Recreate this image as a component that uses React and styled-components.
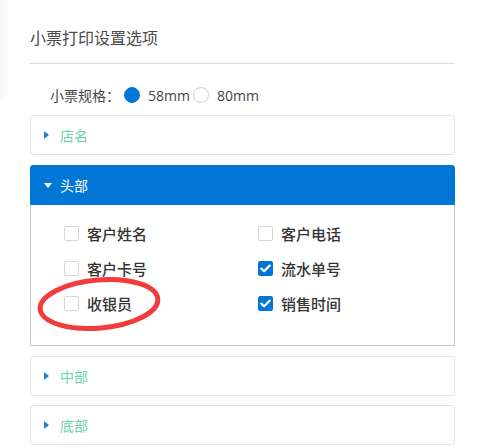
import styled, { createGlobalStyle } from 'styled-components';

const GlobalStyle = createGlobalStyle`
  html, body {
    margin: 0;
    padding: 0;
    background: #fff;
  }
  body {
    font-family: "Open Sans", "Noto Sans CJK SC", sans-serif;
    color: #333;
  }
`;

const Page = styled.div`
  position: relative;
  width: 425px;
  padding: 0 32px 0 30px;
  min-height: 448px;

  &::before {
    content: '';
    position: absolute;
    left: 0;
    top: 0;
    width: 9px;
    height: 100px;
    background: linear-gradient(to right, rgba(0, 0, 0, 0.035), rgba(0, 0, 0, 0));
  }
`;

const Title = styled.div`
  padding: 28px 0 14px;
  line-height: 21px;
  font-size: 16px;
  color: #4a4a4a;
  border-bottom: 1px solid #dcdcdc;
`;

const SizeRow = styled.div`
  display: flex;
  align-items: center;
  height: 20px;
  margin: 21px 0 10px;
  padding-left: 20px;
  font-size: 14px;
  color: #444;
`;

const SizeLabel = styled.span`
  margin-right: 4px;
`;

const Radio = styled.span`
  width: 16px;
  height: 16px;
  box-sizing: border-box;
  border-radius: 50%;
  border: 1px solid ${p => (p.$checked ? '#0076d7' : '#d0d0d0')};
  background: ${p => (p.$checked ? '#0076d7' : '#fff')};
  margin-right: 8px;
`;

const RadioText = styled.span`
  font-size: 14px;
  margin-right: 3px;
`;

const Panel = styled.div`
  margin-bottom: ${p => p.$gap || 10}px;
  border-radius: 3px;
`;

const Header = styled.div`
  display: flex;
  align-items: center;
  height: 40px;
  box-sizing: border-box;
  padding-left: 13px;
  border: 1px solid ${p => (p.$open ? '#0076d7' : '#e3e3e3')};
  border-radius: ${p => (p.$open ? '3px 3px 0 0' : '3px')};
  background: ${p => (p.$open ? '#0076d7' : '#fff')};
  color: ${p => (p.$open ? '#fff' : '#6fd3a5')};
  font-size: 14px;
`;

const Caret = styled.span`
  display: inline-block;
  width: 0;
  height: 0;
  margin-right: ${p => (p.$open ? '8px' : '11px')};
  ${p =>
    p.$open
      ? `border-left: 4.5px solid transparent;
         border-right: 4.5px solid transparent;
         border-top: 5px solid #fff;`
      : `border-top: 4.5px solid transparent;
         border-bottom: 4.5px solid transparent;
         border-left: 5px solid #1c7fd9;`}
`;

const Body = styled.div`
  position: relative;
  height: 141px;
  box-sizing: border-box;
  border: 1px solid #c8c8c8;
  border-top: none;
  padding: 11px 0 0 33px;
`;

const Grid = styled.div`
  display: grid;
  grid-template-columns: 194px 160px;
  grid-auto-rows: 35px;
`;

const Option = styled.label`
  display: flex;
  align-items: center;
  font-size: 15px;
  color: #333;
  font-weight: 500;
`;

const Box = styled.span`
  display: flex;
  align-items: center;
  justify-content: center;
  width: 15px;
  height: 15px;
  box-sizing: border-box;
  border-radius: 2px;
  border: 1px solid ${p => (p.$checked ? '#0076d7' : '#d6d6d6')};
  background: ${p => (p.$checked ? '#0076d7' : '#fff')};
  margin-right: 8px;
`;

const Circle = styled.svg`
  position: absolute;
  left: 3px;
  top: 69px;
  pointer-events: none;
`;

const Check = () => (
  <svg width="11" height="9" viewBox="0 0 11 9">
    <path d="M1.3 4.6 L4.1 7.2 L9.7 1.6" fill="none" stroke="#fff" strokeWidth="2.2" strokeLinecap="round" strokeLinejoin="round" />
  </svg>
);

const options = [
  { label: '客户姓名', checked: false },
  { label: '客户电话', checked: false },
  { label: '客户卡号', checked: false },
  { label: '流水单号', checked: true },
  { label: '收银员', checked: false },
  { label: '销售时间', checked: true },
];

const Closed = ({ title, gap }) => (
  <Panel $gap={gap}>
    <Header>
      <Caret />
      {title}
    </Header>
  </Panel>
);

export default function App() {
  return (
    <>
      <GlobalStyle />
      <Page>
        <Title>小票打印设置选项</Title>
        <SizeRow>
          <SizeLabel>小票规格：</SizeLabel>
          <Radio $checked />
          <RadioText>58mm</RadioText>
          <Radio />
          <RadioText>80mm</RadioText>
        </SizeRow>

        <Closed title="店名" gap={10} />

        <Panel>
          <Header $open>
            <Caret $open />
            头部
          </Header>
          <Body>
            <Grid>
              {options.map(o => (
                <Option key={o.label}>
                  <Box $checked={o.checked}>{o.checked && <Check />}</Box>
                  {o.label}
                </Option>
              ))}
            </Grid>
            <Circle width="130" height="60" viewBox="0 0 130 60">
              <ellipse cx="65" cy="30" rx="59" ry="24" fill="none" stroke="#f23b3b" strokeWidth="5" transform="rotate(-5 65 30)" />
            </Circle>
          </Body>
        </Panel>

        <Closed title="中部" gap={9} />
        <Closed title="底部" />
      </Page>
    </>
  );
}
